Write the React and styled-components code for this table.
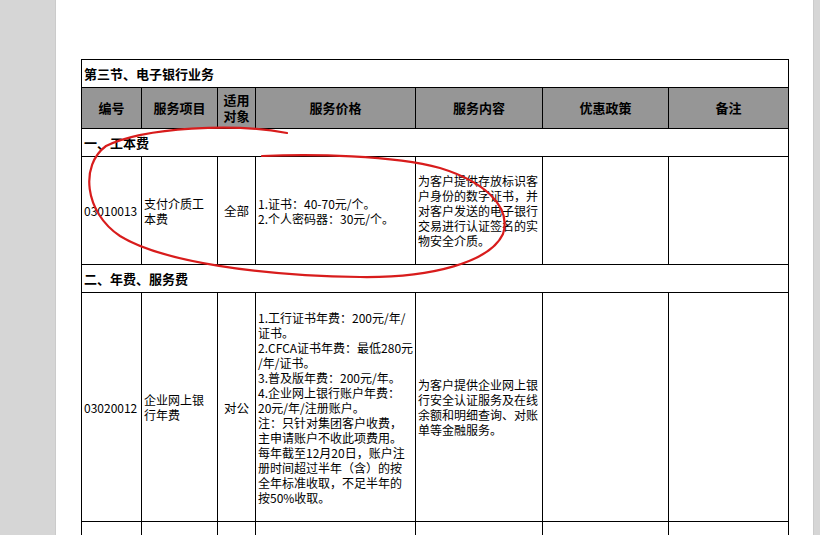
import React from "react";
import styled, { createGlobalStyle } from "styled-components";

const Global = createGlobalStyle`
  html, body { margin: 0; padding: 0; }
  body {
    width: 820px;
    height: 535px;
    overflow: hidden;
    background: #d6d6d6;
    font-family: "Noto Sans CJK SC", "DejaVu Sans", sans-serif;
    color: #000;
  }
`;

const Viewport = styled.div`
  position: relative;
  display: flex;
  width: 820px;
  height: 535px;
  overflow: hidden;
`;

const SideGutter = styled.div`
  flex: 0 0 ${(p) => p.$w}px;
  background: #d6d6d6;
  border-${(p) => p.$edge}: 1px solid #cbcbcb;
  box-sizing: border-box;
`;

const Sheet = styled.div`
  flex: 0 0 757px;
  background: #fff;
  padding: 59px 0 0 25px;
  box-sizing: border-box;
`;

const Table = styled.table`
  border-collapse: collapse;
  table-layout: fixed;
  width: 707px;
  font-size: 12px;
  line-height: 15px;
  td, th {
    border: 1px solid #000;
    padding: 0 2px 0 2px;
    vertical-align: middle;
    overflow: hidden;
  }
`;

const Row = styled.tr`
  height: ${(p) => p.$h}px;
`;

const TitleCell = styled.td`
  font-size: 13px;
  font-weight: 700;
  text-align: left;
  padding-left: 2px;
`;

const HeadCell = styled.th`
  background: #969696;
  font-size: 13px;
  font-weight: 700;
  text-align: center;
  line-height: 16px;
`;

const Cell = styled.td`
  text-align: ${(p) => (p.$center ? "center" : "left")};
  white-space: ${(p) => (p.$nowrap ? "nowrap" : "normal")};
  font-size: ${(p) => (p.$size ? p.$size : 12)}px;
`;

const Lines = styled.div`
  display: flex;
  flex-direction: column;
  white-space: nowrap;
`;

const Annotation = styled.svg`
  position: absolute;
  left: 0;
  top: 0;
  pointer-events: none;
`;

const cols = [60, 76, 38, 160, 127, 126, 120];

const LineBlock = ({ lines }) => (
  <Lines>
    {lines.map((l, i) => (
      <span key={i}>{l}</span>
    ))}
  </Lines>
);

const rows = [
  {
    section: "一、工本费",
    h: 108,
    code: "03010013",
    item: ["支付介质工", "本费"],
    target: "全部",
    price: ["1.证书：40-70元/个。", "2.个人密码器：30元/个。"],
    content: [
      "为客户提供存放标识客",
      "户身份的数字证书，并",
      "对客户发送的电子银行",
      "交易进行认证签名的实",
      "物安全介质。",
    ],
  },
  {
    section: "二、年费、服务费",
    h: 229,
    code: "03020012",
    item: ["企业网上银", "行年费"],
    target: "对公",
    price: [
      "1.工行证书年费：200元/年/",
      "证书。",
      "2.CFCA证书年费：最低280元",
      "/年/证书。",
      "3.普及版年费：200元/年。",
      "4.企业网上银行账户年费：",
      "20元/年/注册账户。",
      "注：只针对集团客户收费，",
      "主申请账户不收此项费用。",
      "每年截至12月20日，账户注",
      "册时间超过半年（含）的按",
      "全年标准收取，不足半年的",
      "按50%收取。",
    ],
    content: [
      "为客户提供企业网上银",
      "行安全认证服务及在线",
      "余额和明细查询、对账",
      "单等金融服务。",
    ],
  },
];

export default function App() {
  return (
    <>
      <Global />
      <Viewport>
        <SideGutter $w={56} $edge="right" />
        <Sheet>
          <Table>
            <colgroup>
              {cols.map((w, i) => (
                <col key={i} style={{ width: w }} />
              ))}
            </colgroup>
            <tbody>
              <Row $h={28}>
                <TitleCell colSpan={7}>第三节、电子银行业务</TitleCell>
              </Row>
              <Row $h={41}>
                <HeadCell>编号</HeadCell>
                <HeadCell>服务项目</HeadCell>
                <HeadCell>
                  适用
                  <br />
                  对象
                </HeadCell>
                <HeadCell>服务价格</HeadCell>
                <HeadCell>服务内容</HeadCell>
                <HeadCell>优惠政策</HeadCell>
                <HeadCell>备注</HeadCell>
              </Row>
              {rows.map((r) => (
                <React.Fragment key={r.code}>
                  <Row $h={28}>
                    <TitleCell colSpan={7}>{r.section}</TitleCell>
                  </Row>
                  <Row $h={r.h}>
                    <Cell $nowrap>{r.code}</Cell>
                    <Cell>
                      <LineBlock lines={r.item} />
                    </Cell>
                    <Cell $center $size={12.5}>
                      {r.target}
                    </Cell>
                    <Cell>
                      <LineBlock lines={r.price} />
                    </Cell>
                    <Cell>
                      <LineBlock lines={r.content} />
                    </Cell>
                    <Cell />
                    <Cell />
                  </Row>
                </React.Fragment>
              ))}
              <Row $h={40}>
                <Cell />
                <Cell />
                <Cell />
                <Cell />
                <Cell />
                <Cell />
                <Cell />
              </Row>
            </tbody>
          </Table>
        </Sheet>
        <SideGutter $w={7} $edge="left" />
        <Annotation width="820" height="535" viewBox="0 0 820 535">
          <path
            d="M287 133 C235 123 145 127 106 146 C80 165 84 212 120 236 C162 262 262 276 360 277 C432 278 490 262 503 234 C512 205 482 181 440 168 C392 155 312 154 262 156"
            fill="none"
            stroke="#d81c1c"
            strokeWidth="2.2"
            strokeLinecap="round"
          />
        </Annotation>
      </Viewport>
    </>
  );
}
